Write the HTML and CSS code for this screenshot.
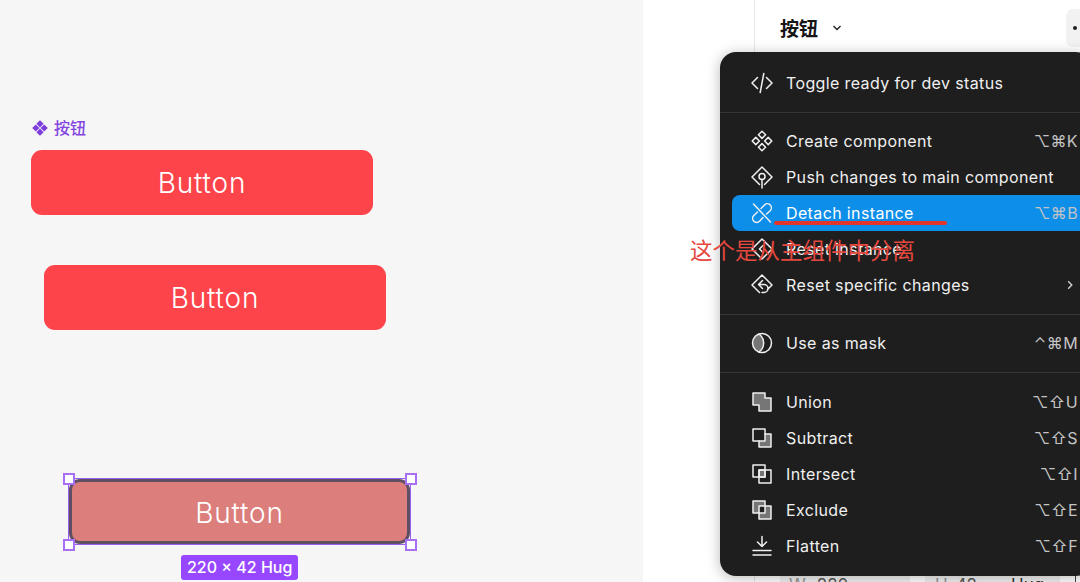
FILE: index.html
```html
<!DOCTYPE html>
<html>
<head>
  <title>按钮</title>
  <link rel="stylesheet" href="styles.css">
</head>
<body>
  <div class="canvas">
    <div class="comp-label">
      <svg class="comp-mark" width="16" height="16" viewBox="0 0 16 16"><path d="M8 .2 11.600 3.800 8 7.400 4.400 3.800ZM3.800 4.400 7.400 8 3.800 11.600 .2 8ZM12.200 4.400 15.800 8 12.200 11.600 8.600 8ZM8 8.600 11.600 12.200 8 15.800 4.400 12.200Z"/></svg>
      <span>按钮</span>
    </div>
    <div class="btn btn-one">Button</div>
    <div class="btn btn-two">Button</div>
    <div class="selection">
      <div class="btn btn-three">Button</div>
      <i class="handle tl"></i><i class="handle tr"></i><i class="handle bl"></i><i class="handle br"></i>
      <div class="size-tag">220 × 42 Hug</div>
    </div>
  </div>

  <div class="gutter"></div>

  <div class="panel">
    <div class="panel-head">
      <span class="panel-title">按钮</span>
      <svg class="caret" width="10" height="6" viewBox="0 0 10 6"><path d="M1.500 1 5 4.500 8.500 1" fill="none" stroke="#222" stroke-width="1.400"/></svg>
      <div class="more-btn"><i></i></div>
    </div>
    <div class="panel-fields">
      <div class="field field-w"><span class="field-key">W</span><span>220</span></div>
      <div class="field field-h"><span class="field-key">H</span><span>42</span><span class="field-hug">Hug</span></div>
      <div class="field-end"></div>
    </div>
  </div>

  <div class="menu">
    <div class="row">
      <svg class="ico" viewBox="0 0 24 24"><path d="M7.500 6.500 2 12l5.500 5.500M16.500 6.500 22 12l-5.500 5.500M13.800 2.500 10.200 21.500"/></svg>
      <span class="row-text">Toggle ready for dev status</span>
    </div>
    <div class="sep"></div>
    <div class="row">
      <svg class="ico" viewBox="0 0 24 24"><path d="M12 2.200 15.600 5.800 12 9.400 8.400 5.800ZM5.800 8.400 9.400 12 5.800 15.600 2.200 12ZM18.200 8.400 21.800 12 18.200 15.600 14.600 12ZM12 14.600 15.600 18.200 12 21.800 8.400 18.200Z"/></svg>
      <span class="row-text">Create component</span>
      <span class="keys">⌥⌘K</span>
    </div>
    <div class="row">
      <svg class="ico" viewBox="0 0 24 24"><path d="M9.500 19.500 2 12 12 2 22 12 14.500 19.500M12 14.500V23"/><circle cx="12" cy="11.500" r="3"/></svg>
      <span class="row-text">Push changes to main component</span>
    </div>
    <div class="row row-active">
      <svg class="ico" viewBox="0 0 24 24"><path d="M3.500 3 20.500 21M11 7.500l3.500-3.500a4 4 0 0 1 5.700 5.700L16.500 13M7.500 11 3.800 14.500a4 4 0 0 0 5.700 5.700L13 16.500"/></svg>
      <span class="row-text">Detach instance</span>
      <span class="keys">⌥⌘B</span>
    </div>
    <div class="row">
      <svg class="ico" viewBox="0 0 24 24"><path d="M12 2 22 12 12 22 2 12Z"/><path d="M13 8.500 9.500 12 13 15.500"/></svg>
      <span class="row-text">Reset instance</span>
    </div>
    <div class="row">
      <svg class="ico" viewBox="0 0 24 24"><path d="M9.500 19.500 2 12 12 2 22 12 17.500 16.500M12.500 7.500 8.500 11.500 12.500 15.500M8.500 11.500H14A3.800 3.800 0 0 1 14 19.500H12"/></svg>
      <span class="row-text">Reset specific changes</span>
      <svg class="sub-arrow" width="6" height="10" viewBox="0 0 6 10"><path d="M1.200 1.200 4.800 5 1.200 8.800" fill="none" stroke="#d0d0d0" stroke-width="1.400"/></svg>
    </div>
    <div class="sep"></div>
    <div class="row">
      <svg class="ico" viewBox="0 0 24 24"><path class="fill-grey no-line" d="M9 3A9.500 9.500 0 0 0 9 21 11 11 0 0 0 9 3Z"/><circle cx="12" cy="12" r="9.500"/><path d="M9 3A11 11 0 0 1 9 21"/></svg>
      <span class="row-text">Use as mask</span>
      <span class="keys">⌃⌘M</span>
    </div>
    <div class="sep sep-wide"></div>
    <div class="row">
      <svg class="ico" viewBox="0 0 24 24"><path class="fill-grey" d="M3 3H15V8H21V21H9V15H3Z"/></svg>
      <span class="row-text">Union</span>
      <span class="keys">⌥⇧U</span>
    </div>
    <div class="row">
      <svg class="ico" viewBox="0 0 24 24"><path class="fill-grey no-line" d="M15 8H21V21H9V15H15Z"/><path d="M15 8H21V21H9V15"/><rect x="3" y="3" width="12" height="12"/></svg>
      <span class="row-text">Subtract</span>
      <span class="keys">⌥⇧S</span>
    </div>
    <div class="row">
      <svg class="ico" viewBox="0 0 24 24"><rect class="fill-grey" x="9" y="8" width="6" height="7"/><rect x="3" y="3" width="12" height="12"/><rect x="9" y="8" width="12" height="13"/></svg>
      <span class="row-text">Intersect</span>
      <span class="keys">⌥⇧I</span>
    </div>
    <div class="row">
      <svg class="ico" viewBox="0 0 24 24"><path class="fill-grey no-line" d="M3 3H15V8H21V21H9V15H3Z"/><rect class="fill-dark no-line" x="9" y="8" width="6" height="7"/><rect x="3" y="3" width="12" height="12"/><rect x="9" y="8" width="12" height="13"/></svg>
      <span class="row-text">Exclude</span>
      <span class="keys">⌥⇧E</span>
    </div>
    <div class="row">
      <svg class="ico" viewBox="0 0 24 24"><path d="M12 2.500V12M7.500 8 12 12.500 16.500 8M3 16.500H21M3 21H21"/></svg>
      <span class="row-text">Flatten</span>
      <span class="keys">⌥⇧F</span>
    </div>
  </div>

  <div class="mark-line"></div>
  <div class="mark-note">这个是从主组件中分离</div>
</body>
</html>
```

FILE: styles.css
```css
html,
body {
  margin: 0;
  height: 100%;
  overflow: hidden;
}

body {
  display: flex;
  width: 1080px;
  height: 582px;
  position: relative;
  font-family: Inter, "Noto Sans CJK SC", sans-serif;
  background-color: #fff;
}

/* left side, free canvas */
.canvas {
  position: relative;
  width: 643px;
  flex-shrink: 0;
  background-color: #f6f6f7;
}

.comp-label {
  position: absolute;
  left: 32px;
  top: 118px;
  display: flex;
  align-items: center;
  gap: 6px;
  color: #8445e0;
  font-size: 16px;
  font-weight: 500;
  line-height: 20px;
}

.comp-mark {
  fill: #7d3fdc;
}

.btn {
  position: absolute;
  display: flex;
  align-items: center;
  justify-content: center;
  width: 342px;
  height: 65px;
  border-radius: 11px;
  color: #fff;
  font-size: 28px;
  font-weight: 300;
  letter-spacing: 0.8px;
  background-color: #fd444a;
}

.btn-one {
  left: 31px;
  top: 150px;
}

.btn-two {
  left: 44px;
  top: 265px;
}

.selection {
  position: absolute;
  left: 68px;
  top: 478px;
  width: 343px;
  height: 67px;
  border: 1.500px solid #9b5cf0;
  box-sizing: border-box;
}

.btn-three {
  left: 0;
  top: 0;
  width: 100%;
  height: 100%;
  box-sizing: border-box;
  padding-top: 2px;
  border: 3px solid #5f4f63;
  background-color: #db7e7c;
}

.handle {
  position: absolute;
  width: 12px;
  height: 12px;
  box-sizing: border-box;
  background-color: #fff;
  border: 2px solid #a66ff5;
}

.tl { left: -6.500px; top: -6.500px; }
.tr { right: -6.500px; top: -6.500px; }
.bl { left: -6.500px; bottom: -6.500px; }
.br { right: -6.500px; bottom: -6.500px; }

.size-tag {
  position: absolute;
  left: 112px;
  top: 76px;
  padding: 0 6px;
  height: 25px;
  line-height: 25px;
  border-radius: 3px;
  color: #fff;
  font-size: 16px;
  font-weight: 500;
  white-space: nowrap;
  background-color: #9747ff;
}

.gutter {
  width: 111px;
  flex-shrink: 0;
}

/* right panel behind the menu */
.panel {
  flex: 1;
  display: flex;
  flex-direction: column;
  justify-content: space-between;
  border-left: 1px solid #e6e6e6;
}

.panel-head {
  display: flex;
  align-items: center;
  height: 55px;
  padding-left: 25px;
}

.panel-title {
  font-size: 19px;
  font-weight: 700;
  color: #161616;
}

.caret {
  margin-left: 14px;
}

.more-btn {
  width: 40px;
  height: 38px;
  margin-left: auto;
  margin-right: -26px;
  border-radius: 7px;
  background-color: #f2f2f2;
  display: flex;
  align-items: center;
  padding-left: 7px;
  box-sizing: border-box;
}

.more-btn i {
  width: 4px;
  height: 4px;
  border-radius: 50%;
  background-color: #222;
}

.panel-fields {
  display: flex;
  height: 6px;
  padding-left: 25px;
  overflow: hidden;
  font-size: 17px;
  line-height: 18px;
  color: #555;
}

.field {
  display: flex;
  background-color: #f1f1f1;
  box-sizing: border-box;
}

.field-w {
  width: 130px;
  padding-left: 9px;
  gap: 11px;
}

.field-h {
  width: 135px;
  margin-left: 15px;
  padding-left: 10px;
  gap: 8px;
}

.field-key {
  color: #999;
}

.field-hug {
  margin-left: 26px;
  color: #333;
}

.field-end {
  width: 1px;
  margin-left: 15px;
  background-color: #444;
}

/* context menu */
.menu {
  position: absolute;
  left: 720px;
  top: 52px;
  width: 372px;
  height: 524px;
  box-sizing: border-box;
  padding: 13px 0;
  border-radius: 16px;
  background-color: #1e1e1e;
  box-shadow: 0 2px 14px rgba(0, 0, 0, 0.28);
  color: #f0f0f0;
}

.row {
  display: flex;
  align-items: center;
  height: 36px;
  margin-left: 12px;
  padding: 0 14px 0 18px;
  font-size: 16px;
  letter-spacing: 0.37px;
}

.row-active {
  border-radius: 8px;
  background-color: #0d8ee9;
  color: #fff;
}

.row-text {
  margin-left: 12px;
}

.ico {
  width: 24px;
  height: 24px;
  flex-shrink: 0;
  fill: none;
  stroke: #f0f0f0;
  stroke-width: 1.500;
  stroke-linejoin: round;
  stroke-linecap: round;
}

.fill-grey {
  fill: #767676;
}

.fill-dark {
  fill: #1e1e1e;
}

.no-line {
  stroke: none;
}

.keys {
  margin-left: auto;
  color: #c4c4c4;
  letter-spacing: 0.4px;
  font-family: Inter, "DejaVu Sans", sans-serif;
}

.sub-arrow {
  margin-left: auto;
  margin-right: 5px;
}

.sep {
  height: 1px;
  margin: 10.500px 0;
  background-color: #353535;
}

.sep-wide {
  margin-bottom: 11.500px;
}

/* red annotation drawn over the shot */
.mark-line {
  position: absolute;
  left: 774px;
  top: 221px;
  width: 173px;
  height: 4px;
  border-radius: 2px;
  background-color: #e2352c;
}

.mark-note {
  position: absolute;
  left: 690px;
  top: 234px;
  font-family: "Noto Sans CJK SC", sans-serif;
  font-size: 22.500px;
  font-weight: 400;
  line-height: 30px;
  white-space: nowrap;
  color: #e5483f;
}
```
